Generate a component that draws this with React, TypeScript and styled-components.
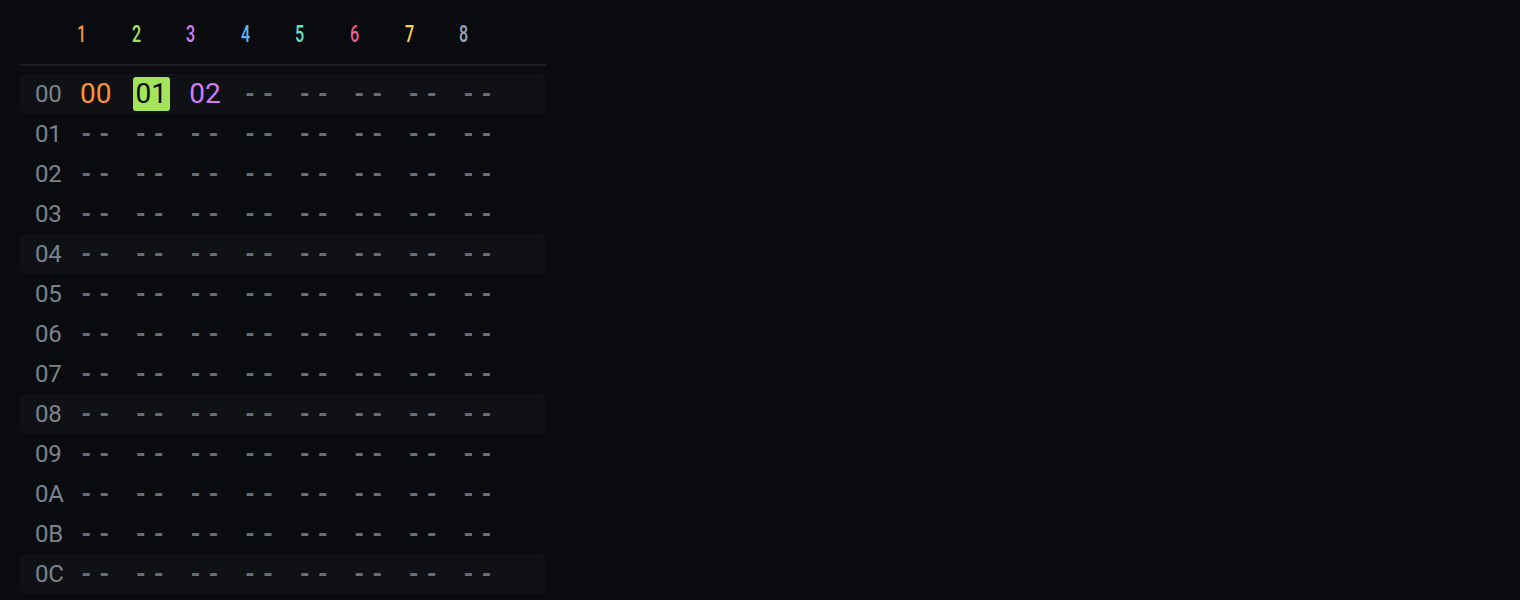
import styled, { createGlobalStyle } from 'styled-components'

const GlobalStyle = createGlobalStyle`
  html, body {
    margin: 0;
    padding: 0;
    background: #0a0b0e;
  }
  body {
    font-family: Roboto, 'Liberation Sans', sans-serif;
  }
`

const trackColors = ['#fb923c', '#a3e45a', '#d17cf5', '#5fb3f3', '#5fe3c6', '#f05b92', '#fcd34d', '#94a3b8']

const Page = styled.div`
  width: 526px;
  padding: 0 20px;
`

const Header = styled.div`
  display: grid;
  grid-template-columns: 43px repeat(8, 54.6px);
  align-items: center;
  height: 66px;
  padding: 5px 0 0 15px;
  box-sizing: border-box;
  border-bottom: 2px solid #1a1c21;
  margin-bottom: 8px;
`

const TrackNum = styled.span<{ $color: string }>`
  justify-self: start;
  display: inline-block;
  margin-left: -1px;
  font-family: Roboto, 'Liberation Sans', sans-serif;
  font-size: 23px;
  font-weight: 500;
  transform: scaleX(0.7);
  transform-origin: left center;
  color: ${({ $color }) => $color};
`

const Row = styled.div<{ $beat: boolean }>`
  display: grid;
  grid-template-columns: 43px repeat(8, 54.6px);
  align-items: center;
  height: 40px;
  padding-left: 15px;
  border-radius: 6px;
  background: ${({ $beat }) => ($beat ? '#0f1115' : 'transparent')};
`

const RowLabel = styled.span`
  font-size: 24px;
  color: #7a828d;
  letter-spacing: -0.3px;
`

const Note = styled.span<{ $color: string; $active?: boolean }>`
  justify-self: start;
  font-size: 28px;
  line-height: 34px;
  padding: 0 3px;
  margin-left: ${({ $active }) => ($active ? '0' : '-1px')};
  border-radius: 3px;
  color: ${({ $color, $active }) => ($active ? '#0a0b0e' : $color)};
  background: ${({ $color, $active }) => ($active ? $color : 'transparent')};
`

const Empty = styled.span`
  font-family: 'Liberation Mono', 'DejaVu Sans Mono', monospace;
  font-size: 24px;
  font-weight: 700;
  letter-spacing: 3.6px;
  color: #6a7079;
  padding-left: 1px;
`

const rows = Array.from({ length: 13 }, (_, i) => i)
const firstRow: Record<number, { text: string; active?: boolean }> = {
  0: { text: '00' },
  1: { text: '01', active: true },
  2: { text: '02' },
}

const hex = (n: number) => n.toString(16).toUpperCase().padStart(2, '0')

export default function App() {
  return (
    <>
      <GlobalStyle />
      <Page>
        <Header>
          <span />
          {trackColors.map((c, i) => (
            <TrackNum key={i} $color={c}>{i + 1}</TrackNum>
          ))}
        </Header>
        {rows.map((r) => (
          <Row key={r} $beat={r % 4 === 0}>
            <RowLabel>{hex(r)}</RowLabel>
            {trackColors.map((c, i) => {
              const note = r === 0 ? firstRow[i] : undefined
              return note ? (
                <Note key={i} $color={c} $active={note.active}>{note.text}</Note>
              ) : (
                <Empty key={i}>--</Empty>
              )
            })}
          </Row>
        ))}
      </Page>
    </>
  )
}
